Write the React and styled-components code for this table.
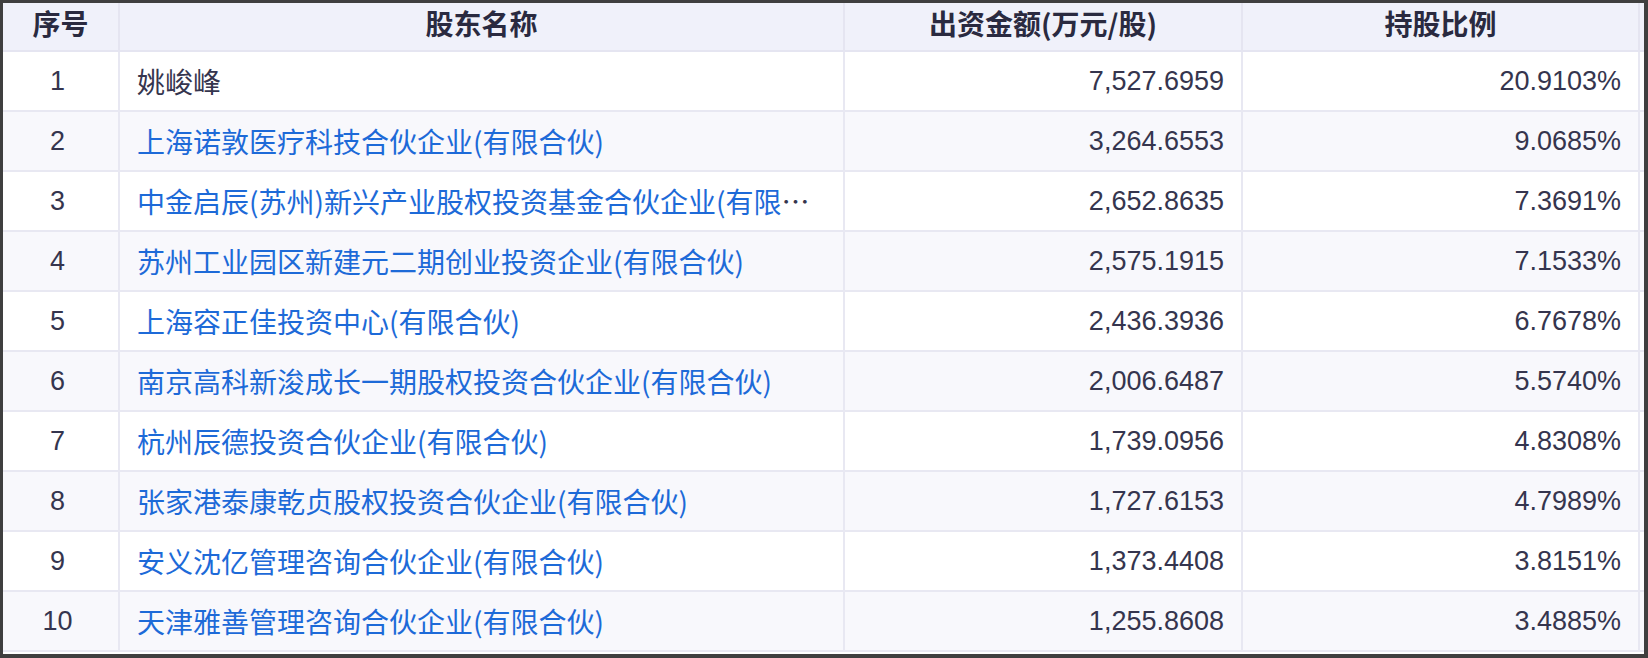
import React from "react";
import styled, { createGlobalStyle } from "styled-components";

const GlobalStyle = createGlobalStyle`
  html, body {
    margin: 0;
    padding: 0;
    background: #3f3f3f;
  }
  * { box-sizing: border-box; }
`;

const Frame = styled.div`
  margin: 3px 4px 4px 3px;
  height: 651px;
  background: #ffffff;
  overflow: hidden;
`;

const COLS = "117px 725px 398px 397px 4px";

const HeaderRow = styled.div`
  display: grid;
  grid-template-columns: ${COLS};
  height: 49px;
  background: #f0f1fa;
  border-bottom: 2px solid #e5e5f1;
`;

const Row = styled.div`
  display: grid;
  grid-template-columns: ${COLS};
  height: 60px;
  background: ${(p) => (p.$striped ? "#f8f8fc" : "#ffffff")};
  border-bottom: 2px solid #e8e8f2;
`;

const HeadCell = styled.div`
  border-right: ${(p) => (p.$filler ? "none" : "2px solid #e5e5f1")};
  font-family: "Noto Sans CJK SC", "Liberation Sans", sans-serif;
  font-size: 28px;
  font-weight: 600;
  line-height: 40px;
  color: #2a2a40;
  text-align: center;
  white-space: nowrap;
  overflow: hidden;
`;

const Cell = styled.div`
  display: flex;
  align-items: center;
  justify-content: ${(p) =>
    p.$align === "right" ? "flex-end" : p.$align === "center" ? "center" : "flex-start"};
  border-right: ${(p) => (p.$filler ? "none" : "2px solid #e8e8f2")};
  padding: ${(p) =>
    p.$align === "right"
      ? "0 17px 0 16px"
      : p.$align === "center"
      ? "0 20px 0 14px"
      : "0 16px 0 17px"};
  font-family: "Liberation Sans", "Noto Sans CJK SC", sans-serif;
  font-size: 27px;
  color: #35354e;
  overflow: hidden;
`;

const NameText = styled.div`
  width: 100%;
  font-family: "Noto Sans CJK SC", "Liberation Sans", sans-serif;
  font-size: 28px;
  line-height: 40px;
  color: #35354e;
  white-space: nowrap;
  overflow: hidden;
  text-overflow: ellipsis;
`;

const Link = styled.span`
  color: ${(p) => (p.$plain ? "#35354e" : "#1d6ad8")};
  cursor: ${(p) => (p.$plain ? "default" : "pointer")};
`;

const rows = [
  ["姚峻峰", "7,527.6959", "20.9103%", true],
  ["上海诺敦医疗科技合伙企业(有限合伙)", "3,264.6553", "9.0685%"],
  ["中金启辰(苏州)新兴产业股权投资基金合伙企业(有限合伙)", "2,652.8635", "7.3691%"],
  ["苏州工业园区新建元二期创业投资企业(有限合伙)", "2,575.1915", "7.1533%"],
  ["上海容正佳投资中心(有限合伙)", "2,436.3936", "6.7678%"],
  ["南京高科新浚成长一期股权投资合伙企业(有限合伙)", "2,006.6487", "5.5740%"],
  ["杭州辰德投资合伙企业(有限合伙)", "1,739.0956", "4.8308%"],
  ["张家港泰康乾贞股权投资合伙企业(有限合伙)", "1,727.6153", "4.7989%"],
  ["安义沈亿管理咨询合伙企业(有限合伙)", "1,373.4408", "3.8151%"],
  ["天津雅善管理咨询合伙企业(有限合伙)", "1,255.8608", "3.4885%"],
];

export default function App() {
  return (
    <>
      <GlobalStyle />
      <Frame>
        <HeaderRow>
          <HeadCell>序号</HeadCell>
          <HeadCell>股东名称</HeadCell>
          <HeadCell>出资金额(万元/股)</HeadCell>
          <HeadCell>持股比例</HeadCell>
          <HeadCell $filler />
        </HeaderRow>
        {rows.map(([name, amount, ratio, plain], i) => (
          <Row key={i} $striped={i % 2 === 1}>
            <Cell $align="center">{i + 1}</Cell>
            <Cell $align="left">
              <NameText>
                <Link $plain={plain}>{name}</Link>
              </NameText>
            </Cell>
            <Cell $align="right">{amount}</Cell>
            <Cell $align="right">{ratio}</Cell>
            <Cell $filler />
          </Row>
        ))}
      </Frame>
    </>
  );
}
